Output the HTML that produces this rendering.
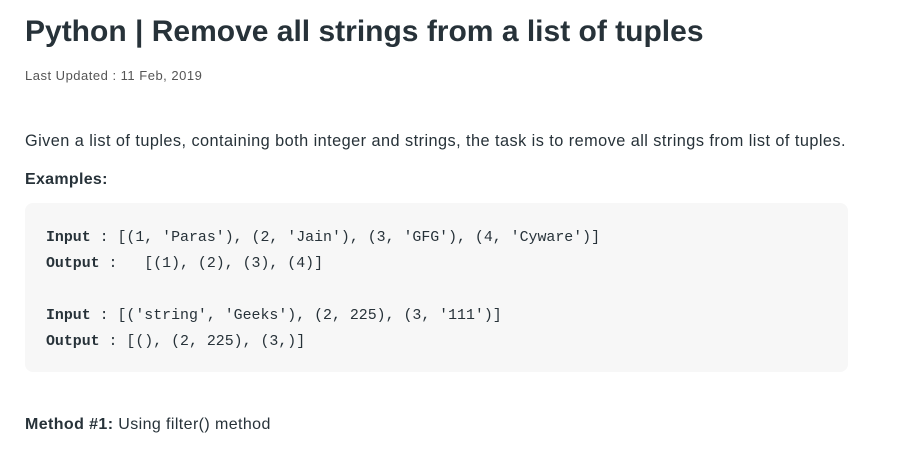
<!DOCTYPE html>
<html><head><meta charset="utf-8"><style>
body{margin:0;background:#fff;width:916px;height:454px;overflow:hidden;font-family:"Liberation Sans",sans-serif;color:#273239}
.t{position:absolute;left:25px;top:15px;font-size:30px;font-weight:bold;letter-spacing:0px;white-space:nowrap;color:#273239}
.d{position:absolute;left:25px;top:68px;font-size:13px;letter-spacing:0.5px;color:#555}
.p{position:absolute;left:25px;top:132px;font-size:16.3px;letter-spacing:0.45px;white-space:nowrap;color:#273239}
.e{position:absolute;left:25px;top:171px;font-size:16px;font-weight:bold;letter-spacing:0.3px}
.box{position:absolute;left:25px;top:203px;width:823px;height:169px;background:#f7f7f7;border-radius:8px}
.code{position:absolute;left:46px;top:225px;font-family:"Liberation Mono",monospace;font-size:14.9px;line-height:26px;white-space:pre;color:#273239}
.m{position:absolute;left:25px;top:416px;font-size:16px;letter-spacing:0.4px;white-space:nowrap}
</style></head><body>
<div class="t">Python | Remove all strings from a list of tuples</div>
<div class="d">Last Updated : 11 Feb, 2019</div>
<div class="p">Given a list of tuples, containing both integer and strings, the task is to remove all strings from list of tuples.</div>
<div class="e">Examples:</div>
<div class="box"></div>
<div class="code"><b>Input</b> : [(1, 'Paras'), (2, 'Jain'), (3, 'GFG'), (4, 'Cyware')]
<b>Output</b> :   [(1), (2), (3), (4)]

<b>Input</b> : [('string', 'Geeks'), (2, 225), (3, '111')]
<b>Output</b> : [(), (2, 225), (3,)]</div>
<div class="m"><b>Method #1:</b> Using filter() method</div>
</body></html>
